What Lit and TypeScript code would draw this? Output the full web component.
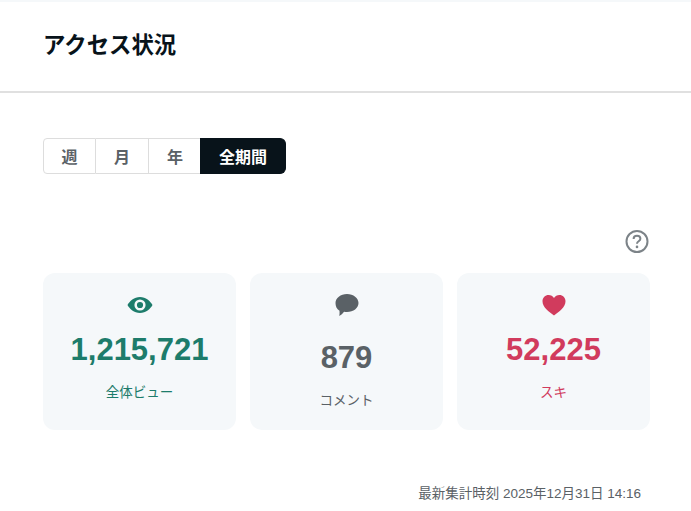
import { LitElement, html, css } from "lit";
import { customElement } from "lit/decorators.js";

@customElement("app-root")
export class AppRoot extends LitElement {
  static styles = css`
    :host { display: block; width: 691px; height: 511px; overflow: hidden; background: #fff;
      font-family: "Liberation Sans", "Noto Sans CJK JP", sans-serif; color: #08131a; }
    .topline { height: 2px; background: #f5f8fa; }
    .head { border-bottom: 2px solid #e0e0e0; padding: 0 0 2px 43px; box-sizing: border-box; height: 91px; display: flex; align-items: center; }
    h1 { margin: 0; font-size: 22.4px; font-weight: 700; line-height: 32px; }
    .main { padding: 45px 41px 0 43px; }
    .tabs { display: grid; grid-template-columns: 53px 53px 51px 86px; height: 36px; width: 243px; }
    .tab { box-sizing: border-box; display: flex; align-items: center; justify-content: center; border: 1px solid #ddd; border-left: 0; font-size: 16px; font-weight: 700; color: #5a6166; background: #fff; }
    .tab.first { border-left: 1px solid #ddd; border-radius: 4px 0 0 4px; }
    .tab.third { border-right: 0; padding-left: 1px; }
    .tab.on { background: #08131a; border-color: #08131a; color: #fff; border-radius: 0 6px 6px 0; padding-left: 1px; }
    .help { display: flex; justify-content: flex-end; margin-top: 54px; height: 26px; }
    .help svg { width: 26px; height: 26px; }
    .cards { display: grid; grid-template-columns: repeat(3, 193px); gap: 14px; margin-top: 19px; }
    .card { height: 157px; box-sizing: border-box; border-radius: 12px; background: #f5f8fa; display: flex; flex-direction: column; align-items: center; }
    .icon { width: 26px; height: 26px; margin-top: 19px; }
    .num { font-size: 31px; font-weight: 700; line-height: 40px; }
    .label { font-size: 13.5px; line-height: 20px; }
    .green { color: #1d7c6b; } .gray { color: #5a6166; } .red { color: #d13b5d; }
    .num.n1 { margin-top: 12px; } .label.n1 { margin-top: 13px; }
    .num.n2 { margin-top: 20px; } .label.n2 { margin-top: 13px; }
    .foot { margin-top: 55px; padding-right: 9px; text-align: right; font-size: 13.5px; line-height: 18px; color: #5a6166; }
  `;

  render() {
    return html`
      <div class="topline"></div>
      <header class="head"><h1>アクセス状況</h1></header>
      <main class="main">
        <div class="tabs">
          <div class="tab first">週</div>
          <div class="tab">月</div>
          <div class="tab third">年</div>
          <div class="tab on">全期間</div>
        </div>
        <div class="help">
          <svg viewBox="0 0 26 26" fill="none">
            <circle cx="13" cy="13.500" r="10.500" stroke="#7c8388" stroke-width="2"/>
            <path d="M9.600 10.900c0-2 1.500-3.200 3.400-3.200s3.400 1.200 3.400 3c0 2.600-3.400 2.600-3.400 5" stroke="#7c8388" stroke-width="2"/>
            <circle cx="13" cy="18.900" r="1.300" fill="#7c8388"/>
          </svg>
        </div>
        <div class="cards">
          <div class="card green">
            <svg class="icon" viewBox="0 0 26 26"><path fill-rule="evenodd" fill="currentColor" d="M13 5c5.800 0 10.500 4.300 12.500 8-2 3.700-6.700 8-12.500 8S2.500 16.700.5 13C2.500 9.300 7.200 5 13 5Zm0 2.400a5.600 5.600 0 1 0 0 11.200 5.600 5.600 0 0 0 0-11.200Zm0 2.500a3.100 3.100 0 1 1 0 6.200 3.100 3.100 0 0 1 0-6.200Z"/></svg>
            <div class="num n1">1,215,721</div>
            <div class="label n1">全体ビュー</div>
          </div>
          <div class="card gray">
            <svg class="icon" viewBox="0 0 26 26"><path fill="currentColor" d="M13 2c6.400 0 11.500 4 11.500 9s-5.100 9-11.500 9c-1 0-2-.1-2.900-.3-1.400 1.800-3 3.200-4.800 4.400.3-1.900.4-3.500.2-5.300C2.700 17 1.500 14.200 1.500 11c0-5 5.100-9 11.500-9Z"/></svg>
            <div class="num n2">879</div>
            <div class="label n2">コメント</div>
          </div>
          <div class="card red">
            <svg class="icon" viewBox="0 0 26 26"><path fill="currentColor" d="M13 23.500C8 19.700 1.500 15.500 1.500 9.300 1.500 5.500 4.300 3 7.600 3c2.300 0 4.200 1 5.400 2.900C14.200 4 16.100 3 18.400 3c3.300 0 6.100 2.500 6.100 6.300C24.500 15.500 18 19.700 13 23.500Z"/></svg>
            <div class="num n1">52,225</div>
            <div class="label n1">スキ</div>
          </div>
        </div>
        <div class="foot">最新集計時刻 2025年12月31日 14:16</div>
      </main>
    `;
  }
}
